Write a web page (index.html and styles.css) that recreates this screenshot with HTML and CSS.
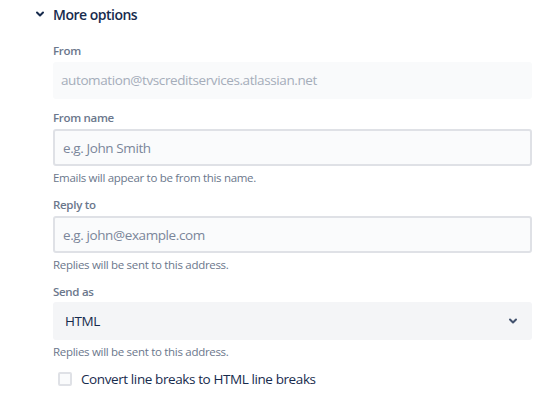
FILE: index.html
```html
<!DOCTYPE html>
<html lang="en">
<head>
    <meta charset="UTF-8">
    <title>More options</title>
    <link rel="stylesheet" href="styles.css">
</head>
<body>

<div class="options">
    <div class="options-header">
        <svg class="chevron" width="10" height="10" viewBox="0 0 10 10">
            <path d="M2 3.5 L5 6.5 L8 3.5" fill="none" stroke="#172b4d" stroke-width="2" stroke-linecap="round" stroke-linejoin="round"/>
        </svg>
        <span class="options-title">More options</span>
    </div>

    <div class="fields">
        <div class="field field-first">
            <label class="field-label">From</label>
            <div class="readonly">automation@tvscreditservices.atlassian.net</div>
        </div>

        <div class="field">
            <label class="field-label">From name</label>
            <input type="text" class="text-input" placeholder="e.g. John Smith">
            <div class="help">Emails will appear to be from this name.</div>
        </div>

        <div class="field">
            <label class="field-label">Reply to</label>
            <input type="text" class="text-input" placeholder="e.g. john@example.com">
            <div class="help">Replies will be sent to this address.</div>
        </div>

        <div class="field">
            <label class="field-label field-label-tight">Send as</label>
            <div class="select">
                <span>HTML</span>
                <svg width="10" height="10" viewBox="0 0 10 10">
                    <path d="M2 3.5 L5 6.5 L8 3.5" fill="none" stroke="#42526e" stroke-width="2" stroke-linecap="round" stroke-linejoin="round"/>
                </svg>
            </div>
            <div class="help">Replies will be sent to this address.</div>
        </div>

        <label class="checkbox-row">
            <span class="checkbox"></span>
            <span>Convert line breaks to HTML line breaks</span>
        </label>
    </div>
</div>

</body>
</html>
```

FILE: styles.css
```css
body {
    margin: 0;
    font-family: 'Open Sans', 'Noto Sans', sans-serif;
    color: #172b4d;
    background-color: #fff;
}

.options {
    padding: 3px 0 0 35px;
}

.options-header {
    display: flex;
    align-items: center;
    gap: 8px;
    height: 22px;
}

.chevron {
    display: block;
}

.options-title {
    font-size: 14px;
    font-weight: 600;
    letter-spacing: -0.5px;
    color: #172b4d;
}

.fields {
    width: 479px;
    padding-left: 18px;
}

.field {
    margin-top: 11px;
}

.field-first {
    margin-top: 18px;
}

.field-label {
    display: block;
    font-size: 11.5px;
    font-weight: 600;
    letter-spacing: -0.3px;
    line-height: 16px;
    color: #6b778c;
    margin-bottom: 3px;
}

.field-label-tight {
    margin-bottom: 2px;
}

.readonly {
    height: 37px;
    line-height: 37px;
    padding: 0 8px;
    font-size: 13.5px;
    letter-spacing: -0.4px;
    color: #a5adba;
    background-color: #f9fafb;
    border-radius: 3px;
}

.text-input {
    display: block;
    width: 100%;
    height: 37px;
    box-sizing: border-box;
    padding: 0 8px;
    font-family: inherit;
    font-size: 13.5px;
    letter-spacing: -0.4px;
    color: #172b4d;
    background-color: #fafbfc;
    border: 2px solid #dfe1e6;
    border-radius: 3px;
    outline: none;
}

.text-input::placeholder {
    color: #7a869a;
}

.help {
    margin-top: 4px;
    font-size: 11.5px;
    letter-spacing: -0.3px;
    line-height: 16px;
    color: #6b778c;
}

.select {
    display: flex;
    align-items: center;
    justify-content: space-between;
    height: 38px;
    padding: 0 14px 0 12px;
    font-size: 13.5px;
    letter-spacing: -0.4px;
    color: #172b4d;
    background-color: #f4f5f7;
    border-radius: 3px;
}

.select svg {
    display: block;
}

.checkbox-row {
    display: flex;
    align-items: center;
    gap: 9px;
    margin-top: 10px;
    padding-left: 5px;
    font-size: 13.5px;
    letter-spacing: -0.4px;
    color: #172b4d;
}

.checkbox {
    width: 10px;
    height: 10px;
    border: 2px solid #dfe1e6;
    border-radius: 2px;
    background-color: #fafbfc;
}
```
